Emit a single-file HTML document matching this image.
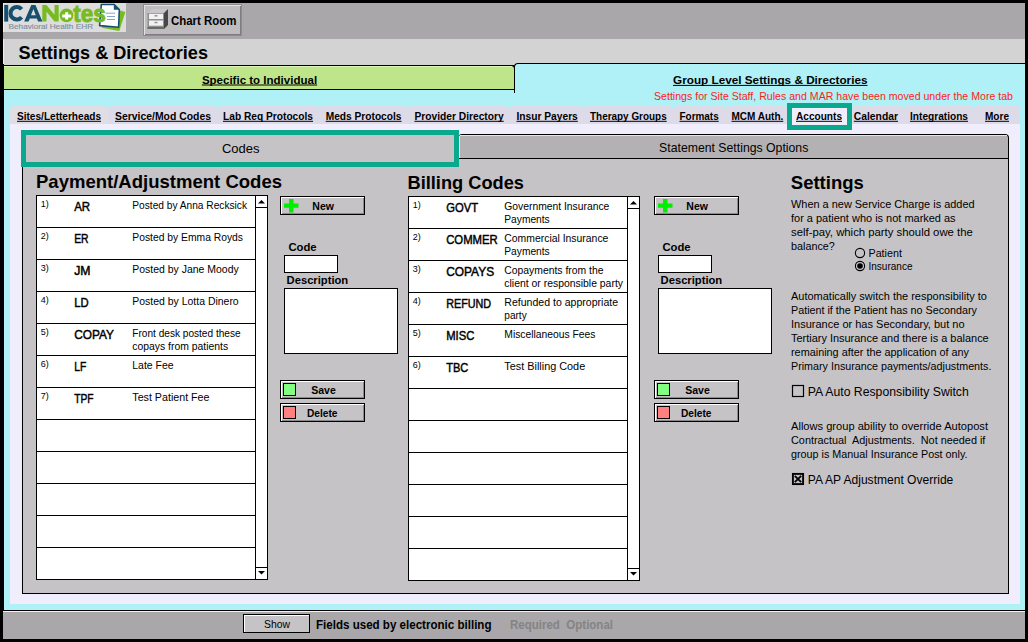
<!DOCTYPE html>
<html><head><meta charset="utf-8">
<style>
*{margin:0;padding:0;box-sizing:border-box}
html,body{width:1028px;height:642px;overflow:hidden;background:#000;font-family:"Liberation Sans",sans-serif;color:#000}
.a{position:absolute}
svg{position:absolute;left:0;top:0}
text{font-family:"Liberation Sans",sans-serif}
</style></head><body>
<div class="a" style="left:3px;top:3px;width:1022px;height:36px;background:#a9a7a9"></div>
<div class="a" style="left:3px;top:3px;width:123px;height:29px;background:#dddddd"></div>
<div class="a" style="left:3px;top:3px;width:1px;height:29px;background:#eeeeee"></div>
<div class="a" style="left:143px;top:4px;width:99px;height:32px;background:#bebcbe;border:1px solid #8d8b8d;box-shadow:inset 1px 1px 0 #e2e2e2,inset -1px -1px 0 #7f7d7f"></div>
<div class="a" style="left:3px;top:39px;width:1022px;height:26px;background:#d3d3d3"></div>
<div class="a" style="left:3px;top:39px;width:1px;height:25px;background:#ececec"></div>
<div class="a" style="left:3px;top:89px;width:1022px;height:522px;background:#aff1f6"></div>
<div class="a" style="left:3px;top:64px;width:1px;height:547px;background:#000"></div>
<div class="a" style="left:3px;top:610px;width:1022px;height:1px;background:#000"></div>
<div class="a" style="left:514px;top:63px;width:511px;height:30px;background:#aff1f6;border-top:1px solid #000;border-left:1px solid #000;border-top-left-radius:4px"></div>
<div class="a" style="left:3px;top:65px;width:512px;height:25px;background:#bfe58b;border:1px solid #000;border-left:none;border-top-right-radius:4px"></div>
<div class="a" style="left:4px;top:66px;width:508px;height:1px;background:#d9f7b5"></div>
<div class="a" style="left:3px;top:65px;width:1px;height:25px;background:#000"></div>
<div class="a" style="left:10px;top:124px;width:1010px;height:480px;background:#f0eefc"></div>
<div class="a" style="left:10px;top:106px;width:98px;height:18px;background:#e0dee2;border-radius:4px 4px 0 0"></div>
<div class="a" style="left:108px;top:106px;width:110px;height:18px;background:#dedbe9;border-radius:4px 4px 0 0"></div>
<div class="a" style="left:218px;top:106px;width:101px;height:18px;background:#dedbe9;border-radius:4px 4px 0 0"></div>
<div class="a" style="left:319px;top:106px;width:89px;height:18px;background:#dedbe9;border-radius:4px 4px 0 0"></div>
<div class="a" style="left:408px;top:106px;width:101px;height:18px;background:#dedbe9;border-radius:4px 4px 0 0"></div>
<div class="a" style="left:509px;top:106px;width:74px;height:18px;background:#dedbe9;border-radius:4px 4px 0 0"></div>
<div class="a" style="left:583px;top:106px;width:90px;height:18px;background:#dedbe9;border-radius:4px 4px 0 0"></div>
<div class="a" style="left:673px;top:106px;width:52px;height:18px;background:#dedbe9;border-radius:4px 4px 0 0"></div>
<div class="a" style="left:725px;top:106px;width:62px;height:18px;background:#dedbe9;border-radius:4px 4px 0 0"></div>
<div class="a" style="left:787px;top:106px;width:65px;height:18px;background:#f0eefc;border-radius:4px 4px 0 0"></div>
<div class="a" style="left:852px;top:106px;width:52px;height:18px;background:#dedbe9;border-radius:4px 4px 0 0"></div>
<div class="a" style="left:904px;top:106px;width:70px;height:18px;background:#dedbe9;border-radius:4px 4px 0 0"></div>
<div class="a" style="left:974px;top:106px;width:46px;height:18px;background:#dedbe9;border-radius:4px 4px 0 0"></div>
<div class="a" style="left:787px;top:103px;width:65px;height:27px;background:#f0eefc;border:5px solid #0aa88c"></div>
<div class="a" style="left:22px;top:158px;width:987px;height:436px;background:#c6c3c6;border:1px solid #000"></div>
<div class="a" style="left:459px;top:134px;width:550px;height:25px;background:#b3b1b3;border-top:1px solid #000;border-right:1px solid #000;border-bottom:1px solid #000;border-top-right-radius:4px;border-top-left-radius:3px"></div>
<div class="a" style="left:460px;top:135px;width:547px;height:1px;background:#e6e4e6"></div>
<div class="a" style="left:459px;top:136px;width:1px;height:22px;background:#f2f2f2"></div>
<div class="a" style="left:21px;top:130px;width:438px;height:37px;background:#c5c3c5;border:5px solid #0aa88c"></div>
<div class="a" style="left:36px;top:195px;width:232px;height:385px;background:#fff;border:1px solid #000"></div>
<div class="a" style="left:36px;top:227px;width:220px;height:1px;background:#000"></div>
<div class="a" style="left:36px;top:259px;width:220px;height:1px;background:#000"></div>
<div class="a" style="left:36px;top:291px;width:220px;height:1px;background:#000"></div>
<div class="a" style="left:36px;top:323px;width:220px;height:1px;background:#000"></div>
<div class="a" style="left:36px;top:355px;width:220px;height:1px;background:#000"></div>
<div class="a" style="left:36px;top:387px;width:220px;height:1px;background:#000"></div>
<div class="a" style="left:36px;top:419px;width:220px;height:1px;background:#000"></div>
<div class="a" style="left:36px;top:451px;width:220px;height:1px;background:#000"></div>
<div class="a" style="left:36px;top:483px;width:220px;height:1px;background:#000"></div>
<div class="a" style="left:36px;top:515px;width:220px;height:1px;background:#000"></div>
<div class="a" style="left:36px;top:547px;width:220px;height:1px;background:#000"></div>
<div class="a" style="left:255px;top:195px;width:1px;height:385px;background:#000"></div>
<div class="a" style="left:255px;top:207px;width:13px;height:1px;background:#000"></div>
<div class="a" style="left:255px;top:567px;width:13px;height:1px;background:#000"></div>
<div class="a" style="left:280px;top:196px;width:85px;height:19px;background:#c5c3c5;border:1px solid #000;box-shadow:inset 1px 1px 0 #fff,inset -1px -1px 0 #8a888a"></div>
<div class="a" style="left:284px;top:255px;width:54px;height:18px;background:#fff;border:1px solid #000"></div>
<div class="a" style="left:284px;top:288px;width:114px;height:66px;background:#fff;border:1px solid #000"></div>
<div class="a" style="left:280px;top:380px;width:85px;height:19px;background:#c5c3c5;border:1px solid #000;box-shadow:inset 1px 1px 0 #fff,inset -1px -1px 0 #8a888a"></div>
<div class="a" style="left:280px;top:403px;width:85px;height:19px;background:#c5c3c5;border:1px solid #000;box-shadow:inset 1px 1px 0 #fff,inset -1px -1px 0 #8a888a"></div>
<div class="a" style="left:408px;top:196px;width:232px;height:385px;background:#fff;border:1px solid #000"></div>
<div class="a" style="left:408px;top:228px;width:220px;height:1px;background:#000"></div>
<div class="a" style="left:408px;top:260px;width:220px;height:1px;background:#000"></div>
<div class="a" style="left:408px;top:292px;width:220px;height:1px;background:#000"></div>
<div class="a" style="left:408px;top:324px;width:220px;height:1px;background:#000"></div>
<div class="a" style="left:408px;top:356px;width:220px;height:1px;background:#000"></div>
<div class="a" style="left:408px;top:388px;width:220px;height:1px;background:#000"></div>
<div class="a" style="left:408px;top:420px;width:220px;height:1px;background:#000"></div>
<div class="a" style="left:408px;top:452px;width:220px;height:1px;background:#000"></div>
<div class="a" style="left:408px;top:484px;width:220px;height:1px;background:#000"></div>
<div class="a" style="left:408px;top:516px;width:220px;height:1px;background:#000"></div>
<div class="a" style="left:408px;top:548px;width:220px;height:1px;background:#000"></div>
<div class="a" style="left:627px;top:196px;width:1px;height:385px;background:#000"></div>
<div class="a" style="left:627px;top:208px;width:13px;height:1px;background:#000"></div>
<div class="a" style="left:627px;top:568px;width:13px;height:1px;background:#000"></div>
<div class="a" style="left:654px;top:196px;width:85px;height:19px;background:#c5c3c5;border:1px solid #000;box-shadow:inset 1px 1px 0 #fff,inset -1px -1px 0 #8a888a"></div>
<div class="a" style="left:658px;top:255px;width:54px;height:18px;background:#fff;border:1px solid #000"></div>
<div class="a" style="left:658px;top:288px;width:114px;height:66px;background:#fff;border:1px solid #000"></div>
<div class="a" style="left:654px;top:380px;width:85px;height:19px;background:#c5c3c5;border:1px solid #000;box-shadow:inset 1px 1px 0 #fff,inset -1px -1px 0 #8a888a"></div>
<div class="a" style="left:654px;top:403px;width:85px;height:19px;background:#c5c3c5;border:1px solid #000;box-shadow:inset 1px 1px 0 #fff,inset -1px -1px 0 #8a888a"></div>
<div class="a" style="left:3px;top:611px;width:1022px;height:28px;background:#a9a7a9;border-top:1px solid #f2f2f2"></div>
<div class="a" style="left:243px;top:614px;width:67px;height:19px;background:#c6c3c6;border:1px solid #000;box-shadow:inset 1px 1px 0 #fff"></div>
<svg width="1028" height="642" viewBox="0 0 1028 642">
<text x="17" y="119.8" font-size="10.5" font-weight="bold" textLength="84" lengthAdjust="spacingAndGlyphs" >Sites/Letterheads</text>
<rect x="17" y="120.8" width="84" height="1" fill="#000"/>
<text x="115" y="119.8" font-size="10.5" font-weight="bold" textLength="96" lengthAdjust="spacingAndGlyphs" >Service/Mod Codes</text>
<rect x="115" y="120.8" width="96" height="1" fill="#000"/>
<text x="223" y="119.8" font-size="10.5" font-weight="bold" textLength="90" lengthAdjust="spacingAndGlyphs" >Lab Req Protocols</text>
<rect x="223" y="120.8" width="90" height="1" fill="#000"/>
<text x="325.7" y="119.8" font-size="10.5" font-weight="bold" textLength="75.8" lengthAdjust="spacingAndGlyphs" >Meds Protocols</text>
<rect x="325.7" y="120.8" width="75.8" height="1" fill="#000"/>
<text x="414.4" y="119.8" font-size="10.5" font-weight="bold" textLength="89.3" lengthAdjust="spacingAndGlyphs" >Provider Directory</text>
<rect x="414.4" y="120.8" width="89.3" height="1" fill="#000"/>
<text x="516.5" y="119.8" font-size="10.5" font-weight="bold" textLength="61.3" lengthAdjust="spacingAndGlyphs" >Insur Payers</text>
<rect x="516.5" y="120.8" width="61.3" height="1" fill="#000"/>
<text x="590" y="119.8" font-size="10.5" font-weight="bold" textLength="76.7" lengthAdjust="spacingAndGlyphs" >Therapy Groups</text>
<rect x="590" y="120.8" width="76.7" height="1" fill="#000"/>
<text x="679.5" y="119.8" font-size="10.5" font-weight="bold" textLength="39.2" lengthAdjust="spacingAndGlyphs" >Formats</text>
<rect x="679.5" y="120.8" width="39.2" height="1" fill="#000"/>
<text x="731.5" y="119.8" font-size="10.5" font-weight="bold" textLength="51.8" lengthAdjust="spacingAndGlyphs" >MCM Auth.</text>
<rect x="731.5" y="120.8" width="51.8" height="1" fill="#000"/>
<text x="796" y="119.8" font-size="10.5" font-weight="bold" textLength="46" lengthAdjust="spacingAndGlyphs" >Accounts</text>
<rect x="796" y="120.8" width="46" height="1" fill="#000"/>
<text x="853.8" y="119.8" font-size="10.5" font-weight="bold" textLength="44.2" lengthAdjust="spacingAndGlyphs" >Calendar</text>
<rect x="853.8" y="120.8" width="44.2" height="1" fill="#000"/>
<text x="910" y="119.8" font-size="10.5" font-weight="bold" textLength="58" lengthAdjust="spacingAndGlyphs" >Integrations</text>
<rect x="910" y="120.8" width="58" height="1" fill="#000"/>
<text x="985" y="119.8" font-size="10.5" font-weight="bold" textLength="24" lengthAdjust="spacingAndGlyphs" >More</text>
<rect x="985" y="120.8" width="24" height="1" fill="#000"/>
<text x="201.9" y="83.5" font-size="11.7" font-weight="bold" textLength="115.2" lengthAdjust="spacingAndGlyphs" >Specific to Individual</text>
<rect x="201.9" y="84.5" width="115.2" height="1" fill="#000"/>
<text x="673" y="83.9" font-size="11.8" font-weight="bold" textLength="194.5" lengthAdjust="spacingAndGlyphs" >Group Level Settings &amp; Directories</text>
<rect x="673" y="84.9" width="194.5" height="1" fill="#000"/>
<text x="654" y="100.2" font-size="11" fill="#fa2418" textLength="359" lengthAdjust="spacingAndGlyphs" >Settings for Site Staff, Rules and MAR have been moved under the More tab</text>
<text x="18.6" y="58.8" font-size="18" font-weight="bold" textLength="189.4" lengthAdjust="spacingAndGlyphs" >Settings &amp; Directories</text>
<text x="171" y="24.6" font-size="12" font-weight="bold" textLength="65.5" lengthAdjust="spacingAndGlyphs" >Chart Room</text>
<text x="222" y="153" font-size="12.5" textLength="37.5" lengthAdjust="spacingAndGlyphs" >Codes</text>
<text x="659.1" y="152.4" font-size="12.25" textLength="149.2" lengthAdjust="spacingAndGlyphs" >Statement Settings Options</text>
<text x="36" y="187.9" font-size="18.4" font-weight="bold" textLength="246" lengthAdjust="spacingAndGlyphs" >Payment/Adjustment Codes</text>
<text x="407.5" y="188.6" font-size="18" font-weight="bold" textLength="116.5" lengthAdjust="spacingAndGlyphs" >Billing Codes</text>
<text x="790.8" y="188.5" font-size="18" font-weight="bold" textLength="73" lengthAdjust="spacingAndGlyphs" >Settings</text>
<path d="M258 203.5 L261.5 200 L265 203.5 Z"/>
<path d="M258 571 L261.5 574.5 L265 571 Z"/>
<text x="40.7" y="207" font-size="9" >1)</text>
<text x="74.2" y="211" font-size="12.3" textLength="16" lengthAdjust="spacingAndGlyphs" stroke="#000" stroke-width="0.45">AR</text>
<text x="132.3" y="209.0" font-size="10" textLength="114.7" lengthAdjust="spacingAndGlyphs" >Posted by Anna Recksick</text>
<text x="40.7" y="239" font-size="9" >2)</text>
<text x="74.2" y="243" font-size="12.3" textLength="14.4" lengthAdjust="spacingAndGlyphs" stroke="#000" stroke-width="0.45">ER</text>
<text x="132.3" y="241.0" font-size="10" textLength="110.7" lengthAdjust="spacingAndGlyphs" >Posted by Emma Royds</text>
<text x="40.7" y="271" font-size="9" >3)</text>
<text x="74.2" y="275" font-size="12.3" textLength="16.3" lengthAdjust="spacingAndGlyphs" stroke="#000" stroke-width="0.45">JM</text>
<text x="132.3" y="273.0" font-size="10" textLength="106.4" lengthAdjust="spacingAndGlyphs" >Posted by Jane Moody</text>
<text x="40.7" y="303" font-size="9" >4)</text>
<text x="74.2" y="307" font-size="12.3" textLength="14.4" lengthAdjust="spacingAndGlyphs" stroke="#000" stroke-width="0.45">LD</text>
<text x="132.3" y="305.0" font-size="10" textLength="106.4" lengthAdjust="spacingAndGlyphs" >Posted by Lotta Dinero</text>
<text x="40.7" y="335" font-size="9" >5)</text>
<text x="74.2" y="339" font-size="12.3" textLength="39.7" lengthAdjust="spacingAndGlyphs" stroke="#000" stroke-width="0.45">COPAY</text>
<text x="132.3" y="337.0" font-size="10" textLength="108.3" lengthAdjust="spacingAndGlyphs" >Front desk posted these</text>
<text x="132.3" y="349.9" font-size="10" textLength="95.9" lengthAdjust="spacingAndGlyphs" >copays from patients</text>
<text x="40.7" y="367" font-size="9" >6)</text>
<text x="74.2" y="371" font-size="12.3" textLength="12" lengthAdjust="spacingAndGlyphs" stroke="#000" stroke-width="0.45">LF</text>
<text x="132.3" y="369.0" font-size="10" textLength="41.2" lengthAdjust="spacingAndGlyphs" >Late Fee</text>
<text x="40.7" y="399" font-size="9" >7)</text>
<text x="74.2" y="403" font-size="12.3" textLength="19.4" lengthAdjust="spacingAndGlyphs" stroke="#000" stroke-width="0.45">TPF</text>
<text x="132.3" y="401.0" font-size="10" textLength="77.2" lengthAdjust="spacingAndGlyphs" >Test Patient Fee</text>
<path d="M289 199h4.5v4.5h5v4.2h-5v4.8h-4.5v-4.8h-5v-4.2h5z" fill="#00ee00"/>
<text x="312.3" y="210.2" font-size="10" font-weight="bold" textLength="21.6" lengthAdjust="spacingAndGlyphs" >New</text>
<text x="288.4" y="250.8" font-size="11" font-weight="bold" textLength="28.2" lengthAdjust="spacingAndGlyphs" >Code</text>
<text x="286.6" y="283.7" font-size="11" font-weight="bold" textLength="61.6" lengthAdjust="spacingAndGlyphs" >Description</text>
<rect x="283.5" y="383.5" width="12" height="12" fill="#80ff80" stroke="#000" stroke-width="1"/>
<text x="311.2" y="394.2" font-size="10" font-weight="bold" textLength="24.6" lengthAdjust="spacingAndGlyphs" >Save</text>
<rect x="283.5" y="406.5" width="12" height="12" fill="#ff8080" stroke="#000" stroke-width="1"/>
<text x="307" y="417.2" font-size="10" font-weight="bold" textLength="30.5" lengthAdjust="spacingAndGlyphs" >Delete</text>
<path d="M630 204.5 L633.5 201 L637 204.5 Z"/>
<path d="M630 572 L633.5 575.5 L637 572 Z"/>
<text x="412.7" y="208" font-size="9" >1)</text>
<text x="446.2" y="212" font-size="12.3" textLength="31.8" lengthAdjust="spacingAndGlyphs" stroke="#000" stroke-width="0.45">GOVT</text>
<text x="504.3" y="210.0" font-size="10" textLength="105" lengthAdjust="spacingAndGlyphs" >Government Insurance</text>
<text x="504.3" y="222.9" font-size="10" textLength="45.4" lengthAdjust="spacingAndGlyphs" >Payments</text>
<text x="412.7" y="240" font-size="9" >2)</text>
<text x="446.2" y="244" font-size="12.3" textLength="51.6" lengthAdjust="spacingAndGlyphs" stroke="#000" stroke-width="0.45">COMMER</text>
<text x="504.3" y="242.0" font-size="10" textLength="104.1" lengthAdjust="spacingAndGlyphs" >Commercial Insurance</text>
<text x="504.3" y="254.9" font-size="10" textLength="45.4" lengthAdjust="spacingAndGlyphs" >Payments</text>
<text x="412.7" y="272" font-size="9" >3)</text>
<text x="446.2" y="276" font-size="12.3" textLength="47.9" lengthAdjust="spacingAndGlyphs" stroke="#000" stroke-width="0.45">COPAYS</text>
<text x="504.3" y="274.0" font-size="10" textLength="99.2" lengthAdjust="spacingAndGlyphs" >Copayments from the</text>
<text x="504.3" y="286.9" font-size="10" textLength="118.7" lengthAdjust="spacingAndGlyphs" >client or responsible party</text>
<text x="412.7" y="304" font-size="9" >4)</text>
<text x="446.2" y="308" font-size="12.3" textLength="44.9" lengthAdjust="spacingAndGlyphs" stroke="#000" stroke-width="0.45">REFUND</text>
<text x="504.3" y="306.0" font-size="10" textLength="113.8" lengthAdjust="spacingAndGlyphs" >Refunded to appropriate</text>
<text x="504.3" y="318.9" font-size="10" textLength="22.4" lengthAdjust="spacingAndGlyphs" >party</text>
<text x="412.7" y="336" font-size="9" >5)</text>
<text x="446.2" y="340" font-size="12.3" textLength="28.2" lengthAdjust="spacingAndGlyphs" stroke="#000" stroke-width="0.45">MISC</text>
<text x="504.3" y="338.0" font-size="10" textLength="91.2" lengthAdjust="spacingAndGlyphs" >Miscellaneous Fees</text>
<text x="412.7" y="368" font-size="9" >6)</text>
<text x="446.2" y="372" font-size="12.3" textLength="22.1" lengthAdjust="spacingAndGlyphs" stroke="#000" stroke-width="0.45">TBC</text>
<text x="504.3" y="370.0" font-size="10" textLength="80.9" lengthAdjust="spacingAndGlyphs" >Test Billing Code</text>
<path d="M663 199h4.5v4.5h5v4.2h-5v4.8h-4.5v-4.8h-5v-4.2h5z" fill="#00ee00"/>
<text x="686.3" y="210.2" font-size="10" font-weight="bold" textLength="21.6" lengthAdjust="spacingAndGlyphs" >New</text>
<text x="662.4" y="250.8" font-size="11" font-weight="bold" textLength="28.2" lengthAdjust="spacingAndGlyphs" >Code</text>
<text x="660.6" y="283.7" font-size="11" font-weight="bold" textLength="61.6" lengthAdjust="spacingAndGlyphs" >Description</text>
<rect x="657.5" y="383.5" width="12" height="12" fill="#80ff80" stroke="#000" stroke-width="1"/>
<text x="685.2" y="394.2" font-size="10" font-weight="bold" textLength="24.6" lengthAdjust="spacingAndGlyphs" >Save</text>
<rect x="657.5" y="406.5" width="12" height="12" fill="#ff8080" stroke="#000" stroke-width="1"/>
<text x="681" y="417.2" font-size="10" font-weight="bold" textLength="30.5" lengthAdjust="spacingAndGlyphs" >Delete</text>
<text x="791" y="208.0" font-size="11" textLength="183.6" lengthAdjust="spacingAndGlyphs" >When a new Service Charge is added</text>
<text x="791" y="221.9" font-size="11" textLength="164.6" lengthAdjust="spacingAndGlyphs" >for a patient who is not marked as</text>
<text x="791" y="235.8" font-size="11" textLength="181.8" lengthAdjust="spacingAndGlyphs" >self-pay, which party should owe the</text>
<text x="791" y="249.7" font-size="11" textLength="43.8" lengthAdjust="spacingAndGlyphs" >balance?</text>
<circle cx="860" cy="253" r="4.6" fill="none" stroke="#000" stroke-width="1.1"/>
<circle cx="860" cy="266" r="4.6" fill="none" stroke="#000" stroke-width="1.1"/>
<circle cx="860" cy="266" r="2.8"/>
<text x="868.5" y="256.6" font-size="10.5" textLength="33.4" lengthAdjust="spacingAndGlyphs" >Patient</text>
<text x="868.5" y="269.7" font-size="10.3" textLength="44" lengthAdjust="spacingAndGlyphs" >Insurance</text>
<text x="791" y="300.1" font-size="10.8" textLength="195.9" lengthAdjust="spacingAndGlyphs" >Automatically switch the responsibility to</text>
<text x="791" y="314.1" font-size="10.8" textLength="185.9" lengthAdjust="spacingAndGlyphs" >Patient if the Patient has no Secondary</text>
<text x="791" y="328.1" font-size="10.8" textLength="173.6" lengthAdjust="spacingAndGlyphs" >Insurance or has Secondary, but no</text>
<text x="791" y="342.1" font-size="10.8" textLength="197.7" lengthAdjust="spacingAndGlyphs" >Tertiary Insurance and there is a balance</text>
<text x="791" y="356.1" font-size="10.8" textLength="178" lengthAdjust="spacingAndGlyphs" >remaining after the application of any</text>
<text x="791" y="370.1" font-size="10.8" textLength="200.4" lengthAdjust="spacingAndGlyphs" >Primary Insurance payments/adjustments.</text>
<rect x="792.5" y="385.5" width="11" height="11" fill="none" stroke="#000" stroke-width="1.2"/>
<text x="807.8" y="395.9" font-size="12.25" textLength="161" lengthAdjust="spacingAndGlyphs" >PA Auto Responsibility Switch</text>
<text x="791" y="429.5" font-size="10.8" textLength="197" lengthAdjust="spacingAndGlyphs" xml:space="preserve">Allows group ability to override Autopost</text>
<text x="791" y="443.5" font-size="10.8" textLength="194.4" lengthAdjust="spacingAndGlyphs" xml:space="preserve">Contractual  Adjustments.  Not needed if</text>
<text x="791" y="457.5" font-size="10.8" textLength="176.5" lengthAdjust="spacingAndGlyphs" xml:space="preserve">group is Manual Insurance Post only.</text>
<rect x="792.9" y="473.9" width="10.2" height="10.2" fill="none" stroke="#000" stroke-width="1.9"/>
<path d="M794.8 475.8L801.2 482.2M801.2 475.8L794.8 482.2" stroke="#000" stroke-width="1.9"/>
<text x="807.8" y="483.8" font-size="12" textLength="145.5" lengthAdjust="spacingAndGlyphs" >PA AP Adjustment Override</text>
<text x="264" y="627.6" font-size="10.2" textLength="26" lengthAdjust="spacingAndGlyphs" >Show</text>
<text x="316" y="628.6" font-size="12" font-weight="bold" textLength="175.5" lengthAdjust="spacingAndGlyphs" >Fields used by electronic billing</text>
<text x="510" y="628.6" font-size="12" font-weight="bold" fill="#858385" textLength="103" lengthAdjust="spacingAndGlyphs" xml:space="preserve">Required  Optional</text>
<path d="M120 10.5 L125.3 12 L119.3 31 L101.5 27.8 Z" fill="#77bb22"/>
<path d="M101.3 4.5 L114.2 4.5 L119.3 9.6 L118.6 27.3 L99.6 25.6 Z" fill="#fff" stroke="#17506f" stroke-width="1.6" stroke-linejoin="round"/>
<path d="M113.8 4.5 L113.8 9.8 L119.3 9.8 Z" fill="#17506f"/>
<path d="M105.5 13.2H115M107 16.5H115M107 19.5H115" stroke="#7a9bbf" stroke-width="0.9"/>
<g fill="#17506f"><rect x="4.2" y="4.9" width="4" height="16.7"/><path d="M21.63 9.2 A6.3 6.3 0 1 0 21.63 17.3" fill="none" stroke="#17506f" stroke-width="4.1"/><path fill-rule="evenodd" d="M24.2 21.6 L31.3 4.9 L35.5 4.9 L42.4 21.6 L38.1 21.6 L36.9 18.6 L29.8 18.6 L28.6 21.6 Z M31 15.2 L33.4 8.9 L35.8 15.2 Z"/></g>
<path fill="#77bb22" d="M42.3 21.6 L42.3 4.9 L46.5 4.9 L54.5 14.8 L54.5 4.9 L58.7 4.9 L58.7 21.6 L54.5 21.6 L46.5 11.7 L46.5 21.6 Z"/>
<circle cx="66.5" cy="15.4" r="6.8" fill="#77bb22"/>
<path fill="#fff" d="M65.2 12.2h3v2.2h3v3h-3v2.2h-3v-2.2h-3v-3h3z"/>
<text x="73.3" y="21.8" font-size="23.5" font-weight="bold" fill="#77bb22" stroke="#77bb22" stroke-width="0.9" textLength="32.5" lengthAdjust="spacingAndGlyphs">tes</text>
<text x="8.5" y="28.6" font-size="7.6" fill="#7f909c" stroke="#7f909c" stroke-width="0.15" textLength="84.6" lengthAdjust="spacingAndGlyphs">Behavioral Health EHR</text>
<path d="M148 13 L152 9 L168 9 L164 13 Z" fill="#c8c8c8"/>
<path d="M164 13 L168 9 L168 25 L164 29 Z" fill="#474747"/>
<rect x="147.5" y="13" width="16.5" height="16" fill="#8f8f8f"/>
<rect x="149" y="13.8" width="14" height="5.2" fill="#f2f2f2"/>
<rect x="149" y="20.5" width="14" height="5.2" fill="#f2f2f2"/>
<rect x="154.5" y="15" width="3" height="1.6" fill="#9a9a9a"/>
<rect x="154.5" y="21.7" width="3" height="1.6" fill="#9a9a9a"/>
<rect x="147.5" y="27" width="16.5" height="2" fill="#6a6a6a"/>
</svg>
</body></html>
